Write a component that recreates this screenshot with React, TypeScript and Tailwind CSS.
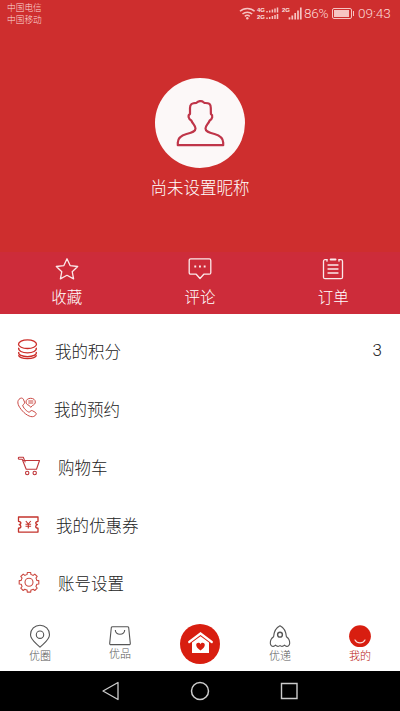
import React from 'react';

const CoinsIcon = () => (
  <svg width="24" height="24" viewBox="0 0 24 24" fill="none" stroke="#cc2d28" strokeWidth="1.300">
    <ellipse cx="10.500" cy="5.200" rx="9" ry="4.300" />
    <path d="M1.800 8.800c-1 3.200 3.700 5 8.700 5s9.700-1.800 8.700-5" />
    <path d="M1.800 13c-1 3 3.700 4.600 8.700 4.600s9.700-1.600 8.700-4.600" />
    <path d="M1.800 16.200c-.4 2 3.700 3.300 8.700 3.300s9.100-1.300 8.700-3.300" />
  </svg>
);

const PhoneIcon = () => (
  <svg width="24" height="24" viewBox="0 0 24 24" fill="none" stroke="#cb4a45" strokeWidth="1" strokeLinejoin="round">
    <path d="M2 2.300C3.500.7 5.600.7 6.300 2.100L7.500 5C7.900 6.200 7.300 6.900 5.800 8C5.300 10 10.300 15.300 12.500 15.200C13.500 13.500 14.500 13.200 15.800 13.900L18.400 15.400C19.700 16.300 19.300 17.600 17.900 18.800C15 21.200 9.500 18.500 5.500 14C1.300 9.500-.5 5 2 2.300Z" />
    <path d="M13.700 1.300c2.700 0 4.600 1.500 4.600 3.700 0 1.600-1 2.800-2.700 3.400l-1.900 2-1.500-2c-2-.5-3.200-1.700-3.200-3.400 0-2.200 2-3.700 4.700-3.700Z" />
    <path d="M11.300 4h5M11.300 6h5" />
  </svg>
);

const CartIcon = () => (
  <svg width="24" height="24" viewBox="0 0 24 24" fill="none" stroke="#c0363a" strokeWidth="1.100" strokeLinejoin="round">
    <path d="M6.300 5.500H22.500L19.500 14.200H9.200L5.200 4.200H2a1 1 0 0 1 0-1.900h4.300l2 5.100" />
    <circle cx="10.200" cy="18" r="1.700" />
    <circle cx="17.700" cy="18" r="1.700" />
  </svg>
);

const CouponIcon = () => (
  <svg width="24" height="24" viewBox="0 0 24 24" fill="none" stroke="#c4332c" strokeWidth="1.300" strokeLinejoin="round">
    <path d="M1.500 4h19.500v4.300c-1.800.2-2.300 1-2.300 1.800s.6 1.400 1.700 1.600c-1.100.3-1.700.9-1.700 1.700s.6 1.600 2.300 1.800v3.900H1.500v-3.900c1.800-.2 2.400-1 2.400-1.800s-.6-1.400-1.700-1.700c1.100-.2 1.700-.8 1.700-1.600s-.6-1.600-2.400-1.800Z" />
    <path d="m8.800 8 2.500 3 2.500-3M11.300 11v4.500M8.500 11.300h5.600M8.500 13.300h5.600" strokeWidth="1.100" />
  </svg>
);

const GearIcon = () => (
  <svg width="24" height="24" viewBox="0 0 24 24" fill="none" stroke="#cc4b43" strokeWidth="1.100" strokeLinejoin="round">
    <path d="M10.300 1.500h3.400l.2 2c.9.200 1.600.5 2.300.9l1.600-1.300 2.400 2.400-1.300 1.600c.4.700.7 1.400.9 2.300l2 .2v3.400l-2 .2c-.2.900-.5 1.600-.9 2.300l1.300 1.600-2.400 2.400-1.600-1.300c-.7.4-1.400.7-2.300.9l-.2 2h-3.400l-.2-2c-.9-.2-1.600-.5-2.300-.9l-1.600 1.300-2.400-2.400 1.300-1.600c-.4-.7-.7-1.400-.9-2.300l-2-.2V9.600l2-.2c.2-.9.500-1.600.9-2.300L3.800 5.500l2.400-2.400 1.600 1.300c.7-.4 1.400-.7 2.300-.9Z" />
    <circle cx="12" cy="11.300" r="4" />
  </svg>
);

const StarIcon = () => (
  <svg width="24" height="24" viewBox="0 0 24 24" fill="none" stroke="#fbe9ea" strokeWidth="1.300" strokeLinejoin="round">
    <path d="m12 1.800 3.100 6.800 7.600.9-5.500 5.200 1.400 7.200L12 18.300l-6.600 3.600 1.400-7.200L1.300 9.500l7.600-.9Z" />
  </svg>
);

const CommentIcon = () => (
  <svg width="24" height="24" viewBox="0 0 24 24" fill="none" stroke="#fbe9ea" strokeWidth="1.300" strokeLinejoin="round">
    <path d="M2.700 1.900h18.600c.9 0 1.500.6 1.500 1.500v12.300c0 .9-.6 1.500-1.500 1.500h-5.500L12 21.500 8.200 17.200H2.700c-.9 0-1.500-.6-1.500-1.500V3.400c0-.9.600-1.500 1.500-1.500Z" />
    <path d="M6.300 9.500h1.900M11 9.500h1.900M15.700 9.500h1.900" strokeWidth="2" />
  </svg>
);

const OrderIcon = () => (
  <svg width="24" height="24" viewBox="0 0 24 24" fill="none" stroke="#fbe9ea" strokeWidth="1.300" strokeLinecap="round">
    <path d="M6 2.700H4a1.500 1.500 0 0 0-1.500 1.500v16A1.500 1.500 0 0 0 4 21.700h16a1.500 1.500 0 0 0 1.500-1.500v-16A1.500 1.500 0 0 0 20 2.700h-2" />
    <path d="M9.700 2.400h4.800" strokeWidth="2" />
    <path d="M6 2.700v1.500M18 2.700v1.500M7 8h10M7 12h10M7 16h10" />
  </svg>
);

const PinIcon = () => (
  <svg width="24" height="24" viewBox="0 0 24 24" fill="none" stroke="#555" strokeWidth="1.100">
    <path d="M12 23.200C8 19.200 2.500 15.700 2.500 10.700a9.500 9.500 0 0 1 19 0C21.500 15.700 16 19.200 12 23.200Z" />
    <circle cx="12" cy="10.700" r="3.700" />
  </svg>
);

const BagIcon = () => (
  <svg width="24" height="24" viewBox="0 0 24 24" fill="none" stroke="#555" strokeWidth="1.100" strokeLinejoin="round">
    <path d="M4.500 2.700h15c.7 0 1.100.4 1.200 1l1.600 15.700c.1.700-.4 1.200-1.100 1.200H2.800c-.7 0-1.200-.5-1.100-1.200L3.300 3.700c.1-.6.500-1 1.200-1Z" />
    <path d="M7.300 6c.2 2.600 2 4.300 4.700 4.300s4.500-1.700 4.700-4.300" />
  </svg>
);

const RocketIcon = () => (
  <svg width="24" height="24" viewBox="0 0 24 24" fill="none" stroke="#555" strokeWidth="1.100" strokeLinejoin="round">
    <path d="M12 1.700c-3.800 1.800-6 5.800-6.400 11C3.300 14.200 2.200 16.500 2.300 19.300c.1 2 1.500 3.200 3 3.100.9 0 1.600-.5 2.200-1.200.8.800 1.700 1.200 2.500 1.200.9 0 1.500-.3 2-.9.500.6 1.100.9 2 .9.800 0 1.700-.4 2.500-1.200.6.700 1.300 1.200 2.200 1.200 1.500.1 2.900-1.100 3-3.100.1-2.800-1-5.100-3.300-6.600-.4-5.200-2.600-9.200-6.400-11Z" />
    <circle cx="12" cy="10.700" r="2.400" strokeWidth="1.400" />
  </svg>
);

const FaceIcon = () => (
  <svg width="24" height="24" viewBox="0 0 24 24" fill="none">
    <circle cx="12" cy="12.200" r="10.900" fill="#d81e10" />
    <path d="M7 16c1.200 2 3 2.900 5 2.900s3.800-.9 5-2.900" stroke="#fbdcd8" strokeWidth="1.200" strokeLinecap="round" />
  </svg>
);

const HomeIcon = () => (
  <svg width="40" height="40" viewBox="0 0 40 40">
    <circle cx="20" cy="20" r="20" fill="#d81e10" />
    <path d="M9.200 18 20.500 9.500 31.800 18" fill="none" stroke="#fff" strokeWidth="2.200" strokeLinecap="round" />
    <path d="M12 18.500 20.500 12.200 29 18.500V29H12Z" fill="#fff" />
    <path d="M20.500 26.500c-2.800-2-4.300-3.500-4.300-5.400 0-2.600 3.200-3 4.300-.9 1.100-2.100 4.300-1.700 4.300.9 0 1.900-1.500 3.400-4.300 5.400Z" fill="#d81e10" />
  </svg>
);

const AvatarIcon = () => (
  <svg width="90" height="90" viewBox="0 0 90 90" fill="none" stroke="#bf3549" strokeWidth="2.200" strokeLinejoin="round">
    <path d="M22.800 67.200V64.500C23 59.500 26 57.500 31.500 56C37.500 54.500 40.500 53.500 40.500 50.500C40.500 47.500 38 46.500 36.300 42.500C33.500 41 32.500 37.500 35 36L35 30C35 26 37 24.800 41.500 24.800C43 23.300 46.500 22.300 48 23.800L49.500 25C54.300 24.800 55.800 26 55.800 30L55.900 36C58.300 37.500 57.400 41 54.700 42.500C53 46.500 50.500 47.500 50.500 50.500C50.500 53.500 53.500 54.500 59.500 56C65 57.500 68 59.500 68.200 64.500V67.200Z" />
  </svg>
);

const StatusIcons = () => (
  <svg width="65" height="16" viewBox="0 0 65 16" fill="none" stroke="#f6c4c2">
    <path d="M1 6.300c3.800-3.800 10.800-3.800 14.600 0M3.500 9c2.700-2.400 7-2.400 9.700 0M5.800 11.400c1.500-1.300 3.500-1.300 5 0" strokeWidth="1.500" />
    <circle cx="8.300" cy="13.300" r="1.200" fill="#f6c4c2" stroke="none" />
    <g fill="#fce4e2" stroke="none" fontFamily="Liberation Sans" fontSize="6" fontWeight="bold">
      <text x="18" y="6.500" textLength="8" lengthAdjust="spacingAndGlyphs">4G</text>
      <text x="18" y="14" textLength="8" lengthAdjust="spacingAndGlyphs">2G</text>
      <text x="43" y="6.500" textLength="8" lengthAdjust="spacingAndGlyphs">2G</text>
    </g>
    <path d="M28 7.500V6M30.700 7.500V5.500M33.400 7.500V4.500M36 7.500V3.500M38.500 7.500V2.500M28 14v-1.500M30.700 14v-2M33.400 14v-3M36 14v-4M38.500 14V9" strokeWidth="1.500" />
    <path d="M50.500 14.500v-2.300M53.300 14.500v-4M56.200 14.500V8M59 14.500V5.500M61.800 14.500V2.500" strokeWidth="1.700" />
  </svg>
);

const shortcuts = [
  { label: '收藏', icon: StarIcon },
  { label: '评论', icon: CommentIcon },
  { label: '订单', icon: OrderIcon },
];

const menuItems = [
  { label: '我的积分', icon: CoinsIcon, pad: 'pl-[14px]', value: '3' },
  { label: '我的预约', icon: PhoneIcon, pad: 'pl-[13px]' },
  { label: '购物车', icon: CartIcon, pad: 'pl-[17px]' },
  { label: '我的优惠券', icon: CouponIcon, pad: 'pl-[15px]' },
  { label: '账号设置', icon: GearIcon, pad: 'pl-[17px]' },
];

const Tab: React.FC<{ label: string; active?: boolean; labelClass?: string; children: React.ReactNode }> = ({
  label,
  active,
  labelClass = 'mt-[2px]',
  children,
}) => (
  <div className="flex w-20 flex-col items-center pt-[11px]">
    {children}
    <span className={`text-[11px] leading-[14px] ${labelClass} ${active ? 'text-[#b8140e]' : 'text-[#555]'}`}>
      {label}
    </span>
  </div>
);

export default function App() {
  return (
    <div className="flex h-[711px] w-[400px] flex-col overflow-hidden bg-white font-['Roboto','Noto_Sans_CJK_SC',sans-serif] font-light">
      {/* Profile header */}
      <header className="flex h-[252px] shrink-0 flex-col bg-[#ce2e2e]">
        <div className="flex h-[28px] items-start justify-between pl-[7px] pr-[9px] text-[#fcd9d7]">
          <div className="pt-[2px] text-[8.700px] leading-[12px]">
            <div>中国电信</div>
            <div>中国移动</div>
          </div>
          <div className="flex items-center pt-[5px]">
            <StatusIcons />
            <span className="w-[25px] text-[13.500px] leading-4 tracking-[-0.3px]">86%</span>
            <span className="ml-[3px] flex h-[11px] w-[20px] rounded-[2px] border border-[#f6c4c2] p-px">
              <span className="w-[15px] bg-[#f6c4c2]" />
            </span>
            <span className="ml-px h-[5px] w-px bg-[#f6c4c2]" />
            <span className="ml-[4px] w-[33px] text-[13.500px] leading-4">09:43</span>
          </div>
        </div>
        <div className="flex flex-col items-center pt-[50px]">
          <div className="h-[90px] w-[90px] rounded-full bg-[#fcf8f8]">
            <AvatarIcon />
          </div>
          <p className="mt-[9px] text-[16.500px] leading-6 text-white">尚未设置昵称</p>
        </div>
      </header>

      {/* Shortcuts */}
      <div className="grid h-[62px] shrink-0 grid-cols-3 bg-[#cd2c3a]">
        {shortcuts.map(({ label, icon: Icon }) => (
          <div key={label} className="flex flex-col items-center pt-[5px] text-white">
            <Icon />
            <span className="mt-[6px] text-[15.500px] leading-[22px]">{label}</span>
          </div>
        ))}
      </div>

      {/* Menu */}
      <main className="flex flex-1 flex-col pt-[8px]">
        {menuItems.map(({ label, icon: Icon, pad, value }) => (
          <div key={label} className="flex h-[58px] items-center pl-[17px] pr-[18px]">
            <Icon />
            <span className={`flex-1 pt-[3px] text-[16.500px] leading-6 text-[#222] ${pad}`}>{label}</span>
            {value && <span className="text-[17px] text-[#222]">{value}</span>}
          </div>
        ))}
      </main>

      {/* Tab bar */}
      <nav className="flex h-[58px] shrink-0">
        <Tab label="优圈"><PinIcon /></Tab>
        <Tab label="优品" labelClass="mt-0"><BagIcon /></Tab>
        <div className="flex w-20 justify-center pt-[11px]">
          <HomeIcon />
        </div>
        <Tab label="优递"><RocketIcon /></Tab>
        <Tab label="我的" active><FaceIcon /></Tab>
      </nav>

      {/* System navigation */}
      <div className="flex h-[40px] shrink-0 items-center justify-center gap-[65px] bg-black">
        <svg width="24" height="24" viewBox="0 0 24 24" fill="none" stroke="#ccc" strokeWidth="1.300" strokeLinejoin="round">
          <path d="M19 3.500v17L4 12Z" />
        </svg>
        <svg width="24" height="24" viewBox="0 0 24 24" fill="none" stroke="#ccc" strokeWidth="1.500">
          <circle cx="12" cy="12" r="8.500" />
        </svg>
        <svg width="24" height="24" viewBox="0 0 24 24" fill="none" stroke="#ccc" strokeWidth="1.400">
          <path d="M4.500 4.500h15.500v15H4.500Z" />
        </svg>
      </div>
    </div>
  );
}
